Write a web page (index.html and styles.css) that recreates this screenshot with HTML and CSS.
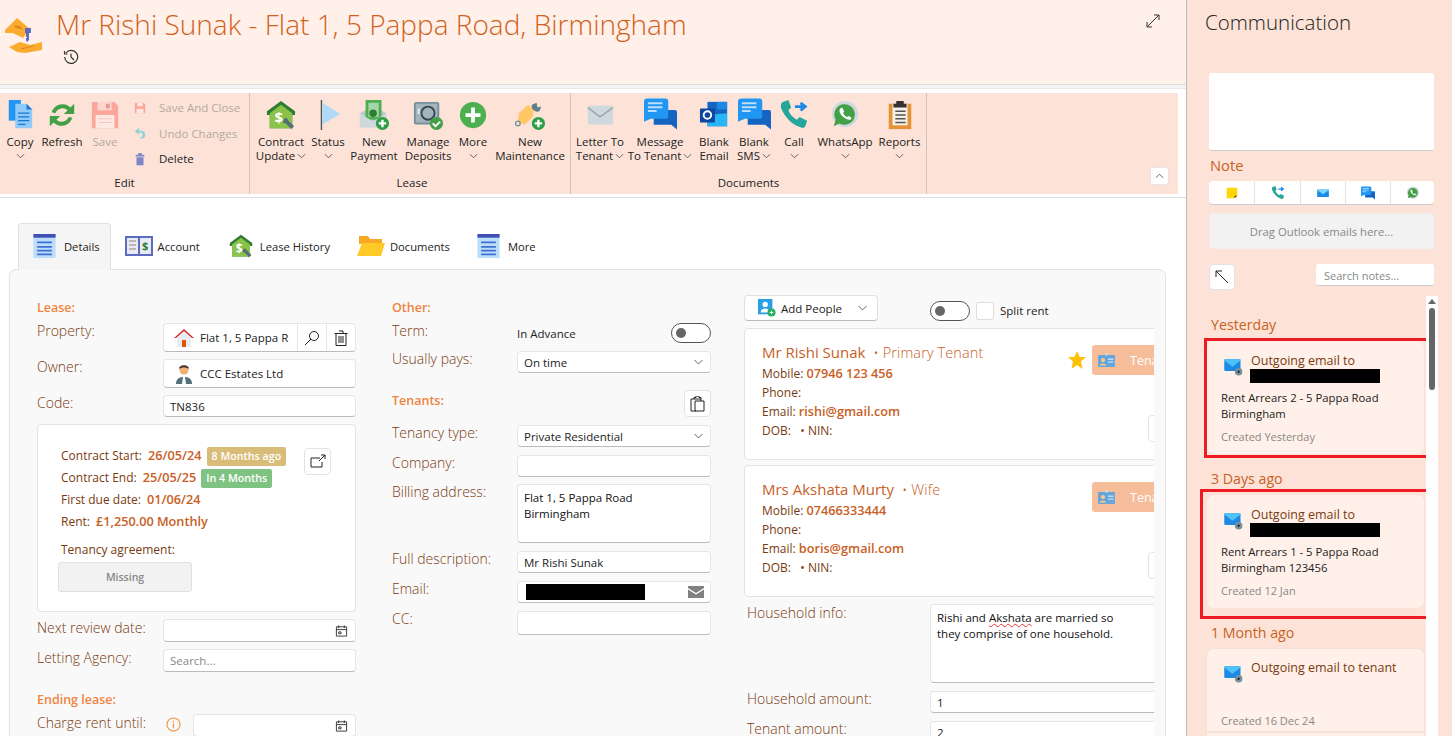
FILE: index.html
```html
<!DOCTYPE html>
<html>
<head>
<meta charset="utf-8">
<title>Lease - Mr Rishi Sunak</title>
<link rel="stylesheet" href="styles.css">
</head>

<body>
<svg class="defs" xmlns="http://www.w3.org/2000/svg">
    <symbol id="i-house-dollar" viewBox="0 0 32 32"><path d="M16 1 1 12v4h3v14h24V16h3v-4z" fill="#2e7d32"/><path d="M4 14 16 5l12 9v16H4z" fill="#8bc34a"/><text x="9" y="25" font-size="16" font-weight="700" fill="#fff" font-family="Open Sans">$</text><path d="M19 20l3-1 2 3 6 6-3 3-6-6-3-1z" fill="#546e7a"/></symbol>
    <symbol id="i-env" viewBox="0 0 32 32"><rect x="3" y="7" width="26" height="18" rx="2" fill="#29b6f6"/><path d="M3 9l13 9 13-9V7H3z" fill="#81d4fa"/><path d="M3 25V11l13 9 13-9v14z" fill="#1e88e5"/></symbol>
    <symbol id="i-env-gear" viewBox="0 0 32 32"><rect x="2" y="5" width="26" height="19" rx="2" fill="#1e88e5"/><path d="M2 7l13 10L28 7V5H2z" fill="#4fc3f7"/><circle cx="25" cy="25" r="6" fill="#78909c"/><circle cx="25" cy="25" r="2" fill="#263238"/></symbol>
    <symbol id="i-chat" viewBox="0 0 34 32"><path d="M10 12h22a2 2 0 0 1 2 2v18l-6-5H10z" fill="#1565c0"/><path d="M3 0h19a3 3 0 0 1 3 3v15a3 3 0 0 1-3 3H7l-7 3V3a3 3 0 0 1 3-3z" fill="#2196f3"/><path d="M4 5h15M4 9h15M4 13h9" stroke="#bbdefb" stroke-width="2"/></symbol>
    <symbol id="i-phone" viewBox="0 0 32 32"><path d="M4 2 10 0l3 8-3 3c2 5 5 8 9 10l3-3 8 4-2 6c-1 2-3 2-5 1C13 26 6 18 2 8 2 5 2 3 4 2z" fill="#26a69a"/><path d="M17 7h9M23 3l5 4-5 4" stroke="#1e88e5" stroke-width="3" fill="none"/></symbol>
    <symbol id="i-wa" viewBox="0 0 32 32"><circle cx="16" cy="15" r="14" fill="#cfd8dc"/><path d="M4 28l2-7a11 11 0 1 1 4 4z" fill="#43a047"/><path d="M11 9l2-1 2 4-1 2c1 2 2 3 4 4l2-1 3 2-1 2c-5 1-12-5-12-10z" fill="#fff"/></symbol>
    <symbol id="i-plus" viewBox="0 0 32 32"><circle cx="16" cy="16" r="14" fill="#4caf50"/><path d="M16 8v16M8 16h16" stroke="#fff" stroke-width="4"/></symbol>
    <symbol id="i-list" viewBox="0 0 24 26"><rect width="24" height="26" fill="#bbdefb"/><rect width="24" height="4" fill="#3f51b5"/><path d="M4 8h16v2H4zM4 13h16v2H4zM4 17h16v2H4zM4 21h16v2H4z" fill="#3f6fd0"/></symbol>
    <symbol id="i-cal" viewBox="0 0 14 14"><path d="M1.500 2.500h11v10h-11zM1.500 5.500h11M4 1v3M10 1v3M4 8h2.500v2H4z" fill="none" stroke="#333"/></symbol>
    <symbol id="i-badge" viewBox="0 0 24 20"><rect x="0" y="3" width="24" height="17" rx="1" fill="#64a6dc"/><circle cx="7" cy="10" r="3" fill="#ffca80"/><path d="M2 18c1-4 8-4 10 0z" fill="#ffca80"/><path d="M14 9h8M14 13h8" stroke="#bbdefb" stroke-width="2"/><circle cx="12" cy="2" r="2" fill="#cfd8dc"/></symbol>
    <symbol id="i-chev" viewBox="0 0 10 6"><path d="M1 1l4 4 4-4" fill="none" stroke="currentColor"/></symbol>
</svg>

<div class="main">
    <div class="head">
        <svg class="head-logo" viewBox="0 0 40 38"><path d="M1 13 13 1l13 11-7 9-10-5H1z" fill="#fbab2e"/><path d="M10 8l6 1 3 4-7-2z" fill="#d98a1c"/><path d="M21 11h6v5h-2v7l-2 2-1-2v-2h1v-1h-1v-4h-1z" fill="#5c6bc0"/><path d="M5 30l11-5 10 3 12-3v8l-17 3-8-1z" fill="#fbab2e"/><path d="M17 32l12-3" stroke="#d98a1c"/></svg>
        <div class="head-text">
            <h1>Mr Rishi Sunak - Flat 1, 5 Pappa Road, Birmingham</h1>
            <svg class="history" viewBox="0 0 16 16"><path d="M3 4a6.500 6.500 0 1 1-1.300 4M1.500 2v3h3M8 4.500V8l3 3" fill="none" stroke="#333" stroke-width="1.200"/></svg>
        </div>
        <svg class="expand" viewBox="0 0 16 16"><path d="M2 14 14 2M9 2h5v5M2 9v5h5" fill="none" stroke="#333"/></svg>
    </div>

    <div class="ribbon">
        <div class="ribbon-in">
            <div class="group group-edit">
                <div class="tools">
                    <div class="tool">
                        <svg class="ico" viewBox="0 0 32 32"><path d="M4 0h13v22H4z" fill="#2196f3"/><path d="M11 4h12l6 6v20H11z" fill="#90caf9"/><path d="M23 4l6 6h-6z" fill="#1976d2"/><path d="M14 14h12M14 18h12M14 22h12M14 26h8" stroke="#1976d2" stroke-width="1.500"/></svg>
                        <span>Copy</span><svg class="chev"><use href="#i-chev"/></svg>
                    </div>
                    <div class="tool">
                        <svg class="ico" viewBox="0 0 32 32"><path d="M5 13A12 12 0 0 1 25 8l4-4v11H18l4-4a8 8 0 0 0-13 3z" fill="#43a047"/><path d="M27 19A12 12 0 0 1 7 24l-4 4V17h11l-4 4a8 8 0 0 0 13-3z" fill="#43a047"/></svg>
                        <span>Refresh</span>
                    </div>
                    <div class="tool off">
                        <svg class="ico" viewBox="0 0 32 32"><path d="M2 2h24l4 4v24H2z" fill="#fba79c"/><path d="M8 2h15v9H8z" fill="#fcd5cd"/><path d="M17 4h4v5h-4z" fill="#e09a90"/><path d="M6 16h20v14H6z" fill="#fde8e2"/><path d="M9 20h14M9 24h14" stroke="#f2c4b8"/></svg>
                        <span>Save</span>
                    </div>
                    <div class="stack">
                        <div class="stack-item off"><svg viewBox="0 0 16 16"><path d="M2 2h10l2 2v10H2z" fill="#fba79c"/><path d="M5 2h6v4H5z" fill="#fde8e2"/><path d="M4 9h8v5H4z" fill="#fde8e2"/></svg>Save And Close</div>
                        <div class="stack-item off"><svg viewBox="0 0 16 16"><path d="M7 2 2 6l5 4V7c3 0 4 1 4 3s-1 3-3 3v1c4 1 6-1 6-4 0-4-3-5-7-5z" fill="#8fcfd6"/></svg>Undo Changes</div>
                        <div class="stack-item"><svg viewBox="0 0 16 16"><path d="M3 3h10v2H3zM6 1h4v2H6zM4 6h8v9H4z" fill="#7e86c9"/></svg>Delete</div>
                    </div>
                </div>
                <div class="group-name">Edit</div>
            </div>
            <div class="group group-lease">
                <div class="tools">
                    <div class="tool"><svg class="ico"><use href="#i-house-dollar"/></svg><span>Contract<br>Update<svg class="chev-in"><use href="#i-chev"/></svg></span></div>
                    <div class="tool">
                        <svg class="ico" viewBox="0 0 32 32"><path d="M9 0v32" stroke="#555" stroke-width="1.500"/><path d="M10 3 29 15 10 26z" fill="#aed9f7"/></svg>
                        <span>Status</span><svg class="chev"><use href="#i-chev"/></svg>
                    </div>
                    <div class="tool">
                        <svg class="ico" viewBox="0 0 32 32"><path d="M1 14 15 6l14 8v15H1z" fill="#b8c7d0"/><rect x="7" y="0" width="17" height="21" fill="#4caf50"/><rect x="10" y="3" width="11" height="15" fill="#a5d6a7"/><circle cx="15" cy="14" r="4" fill="#2e7d32"/><path d="M1 14l14 9 14-9v15H1z" fill="#cfd8dc"/><circle cx="25" cy="25" r="7" fill="#2e9e46"/><path d="M25 21v8M21 25h8" stroke="#fff" stroke-width="2.500"/></svg>
                        <span>New<br>Payment</span>
                    </div>
                    <div class="tool">
                        <svg class="ico" viewBox="0 0 32 32"><rect x="1" y="2" width="27" height="24" rx="2" fill="#78909c"/><rect x="3" y="4" width="23" height="20" fill="#a3b4bd"/><circle cx="16" cy="14" r="7" fill="none" stroke="#37474f" stroke-width="2"/><path d="M6 9v6" stroke="#eceff1" stroke-width="2"/><circle cx="25" cy="25" r="7" fill="#43a047"/><path d="M21 25l3 3 5-5" stroke="#fff" stroke-width="2" fill="none"/></svg>
                        <span>Manage<br>Deposits</span>
                    </div>
                    <div class="tool"><svg class="ico"><use href="#i-plus"/></svg><span>More</span><svg class="chev"><use href="#i-chev"/></svg></div>
                    <div class="tool">
                        <svg class="ico" viewBox="0 0 32 32"><path d="M4 14 14 5l6 5-1 8-9 8-7-3z" fill="#ffc766"/><path d="M18 5a6 6 0 0 0 8 7l2-5-4 1-1-5z" fill="#607d8b"/><circle cx="3" cy="25" r="2.500" fill="none" stroke="#78909c" stroke-width="1.500"/><circle cx="25" cy="25" r="7" fill="#2e9e46"/><path d="M25 21v8M21 25h8" stroke="#fff" stroke-width="2.500"/></svg>
                        <span>New<br>Maintenance</span>
                    </div>
                </div>
                <div class="group-name">Lease</div>
            </div>
            <div class="group group-docs">
                <div class="tools">
                    <div class="tool">
                        <svg class="ico" viewBox="0 0 32 32"><rect x="3" y="6" width="27" height="20" rx="2" fill="#cfd8dc"/><path d="M3 8l13 10L30 8" fill="none" stroke="#90a4ae" stroke-width="1.500"/></svg>
                        <span>Letter To<br>Tenant<svg class="chev-in"><use href="#i-chev"/></svg></span>
                    </div>
                    <div class="tool"><svg class="ico ico-chat"><use href="#i-chat"/></svg><span>Message<br>To Tenant<svg class="chev-in"><use href="#i-chev"/></svg></span></div>
                    <div class="tool">
                        <svg class="ico" viewBox="0 0 32 32"><rect x="9" y="2" width="21" height="26" fill="#1565c0"/><path d="M19 2h11v8H19z" fill="#1e88e5"/><path d="M9 16 30 14v14H9z" fill="#29b6f6"/><rect x="1" y="9" width="16" height="15" rx="1" fill="#0d47a1"/><circle cx="9" cy="16" r="4" fill="none" stroke="#fff" stroke-width="2"/></svg>
                        <span>Blank<br>Email</span>
                    </div>
                    <div class="tool"><svg class="ico ico-chat"><use href="#i-chat"/></svg><span>Blank<br>SMS<svg class="chev-in"><use href="#i-chev"/></svg></span></div>
                    <div class="tool"><svg class="ico"><use href="#i-phone"/></svg><span>Call</span><svg class="chev"><use href="#i-chev"/></svg></div>
                    <div class="tool"><svg class="ico"><use href="#i-wa"/></svg><span>WhatsApp</span><svg class="chev"><use href="#i-chev"/></svg></div>
                    <div class="tool">
                        <svg class="ico" viewBox="0 0 32 32"><rect x="4" y="4" width="24" height="27" fill="#e89237"/><rect x="8" y="4" width="16" height="23" fill="#f5f0e8"/><path d="M12 1h8v3h3v4H9V4h3z" fill="#333"/><path d="M11 12h11M11 16h11M11 20h11M11 24h11" stroke="#555" stroke-width="1.500"/></svg>
                        <span>Reports</span><svg class="chev"><use href="#i-chev"/></svg>
                    </div>
                </div>
                <div class="group-name">Documents</div>
            </div>
            <div class="ribbon-end"><button class="collapse"><svg viewBox="0 0 10 6"><path d="M1 5l4-4 4 4" fill="none" stroke="#555"/></svg></button></div>
        </div>
    </div>

    <div class="tabs">
        <div class="tab active"><svg class="tab-ico"><use href="#i-list"/></svg>Details</div>
        <div class="tab">
            <svg class="tab-ico wide" viewBox="0 0 28 24"><path d="M1 3h13v18H1zM14 3h13v18H14z" fill="#e8eaf6" stroke="#5c6bc0" stroke-width="2"/><path d="M4 7h7M4 11h7M4 15h7" stroke="#b0a8a0" stroke-width="1.500"/><text x="17" y="16" font-size="11" font-weight="700" fill="#2e7d32" font-family="Open Sans">$</text></svg>
            Account
        </div>
        <div class="tab"><svg class="tab-ico wide"><use href="#i-house-dollar"/></svg>Lease History</div>
        <div class="tab">
            <svg class="tab-ico wide" viewBox="0 0 28 24"><path d="M2 2h9l2 3h12v5H2z" fill="#f9a825"/><path d="M0 22 5 9h23l-4 13z" fill="#ffca28"/></svg>
            Documents
        </div>
        <div class="tab"><svg class="tab-ico"><use href="#i-list"/></svg>More</div>
    </div>

    <div class="panel">
        <!-- lease column -->
        <div class="col col-lease">
            <div class="sec">Lease:</div>
            <div class="row">
                <label>Property:</label>
                <div class="field h29 joined">
                    <svg class="f-ico" viewBox="0 0 20 20"><path d="M10 1 0 10h3v9h14v-9h3z" fill="#e8edf2"/><path d="M10 1 0 10h2l8-7 8 7h2z" fill="#d32f2f"/><rect x="8" y="12" width="4" height="7" fill="#e65100"/></svg>
                    <span class="f-text">Flat 1, 5 Pappa R</span>
                    <span class="f-btn"><svg viewBox="0 0 16 16"><circle cx="10" cy="6" r="4.500" fill="none" stroke="#222"/><path d="M7 9l-6 6" stroke="#222"/></svg></span>
                    <span class="f-btn"><svg viewBox="0 0 16 16"><path d="M3 3.500h10v12H3zM1.500 3.500h13M6 1h4v2.500M6 6v7M8 6v7M10 6v7" fill="none" stroke="#222"/></svg></span>
                </div>
            </div>
            <div class="row">
                <label>Owner:</label>
                <div class="field h29">
                    <svg class="f-ico" viewBox="0 0 20 20"><circle cx="10" cy="6" r="4.500" fill="#f0b070"/><path d="M5 5c0-5 10-5 10 0-3-2-7-2-10 0z" fill="#4e342e"/><path d="M2 20c0-6 4-7 8-7s8 1 8 7z" fill="#546e7a"/><path d="M9 13h2l1 7H8z" fill="#fff"/></svg>
                    <span class="f-text">CCC Estates Ltd</span>
                </div>
            </div>
            <div class="row">
                <label>Code:</label>
                <div class="field h22 pad"><span class="f-text">TN836</span></div>
            </div>
            <div class="contract">
                <div class="contract-top">
                    <div class="facts">
                        <div class="fact">Contract Start: <b>26/05/24</b><em class="tag tag-past">8 Months ago</em></div>
                        <div class="fact">Contract End: <b>25/05/25</b><em class="tag tag-next">In 4 Months</em></div>
                        <div class="fact">First due date: <b>01/06/24</b></div>
                        <div class="fact">Rent: <b>£1,250.00</b> <b>Monthly</b></div>
                    </div>
                    <button class="sq-btn"><svg viewBox="0 0 16 16"><path d="M10 4H1v9h11V8M9 7l6-6M11 1h4v4" fill="none" stroke="#222"/></svg></button>
                </div>
                <div class="agree">Tenancy agreement:</div>
                <div class="missing">Missing</div>
            </div>
            <div class="row row-low">
                <label>Next review date:</label>
                <div class="field h23 pad end"><svg class="cal"><use href="#i-cal"/></svg></div>
            </div>
            <div class="row row-low">
                <label>Letting Agency:</label>
                <div class="field h23 pad"><span class="f-hint">Search...</span></div>
            </div>
            <div class="sec sec-end">Ending lease:</div>
            <div class="row row-charge row-low">
                <label>Charge rent until:</label>
                <svg class="info" viewBox="0 0 16 16"><circle cx="8" cy="8" r="7" fill="none" stroke="#f0943f" stroke-width="1.200"/><path d="M8 7v5M8 4v1.500" stroke="#f0943f" stroke-width="1.200"/></svg>
                <div class="field h23 pad end"><svg class="cal"><use href="#i-cal"/></svg></div>
            </div>
        </div>

        <!-- other column -->
        <div class="col col-other">
            <div class="sec">Other:</div>
            <div class="row r7">
                <label>Term:</label>
                <div class="term"><span>In Advance</span><i class="toggle"></i></div>
            </div>
            <div class="row">
                <label>Usually pays:</label>
                <div class="field h22 pad between"><span class="f-text">On time</span><svg class="sel"><use href="#i-chev"/></svg></div>
            </div>
            <div class="sec-row">
                <div class="sec">Tenants:</div>
                <button class="sq-btn"><svg viewBox="0 0 16 16"><path d="M5 3H1v12h5M5 5h9v10H5zM4 3V1.500h2V0h3v1.500h2V5M5 3h6" fill="none" stroke="#222"/></svg></button>
            </div>
            <div class="row">
                <label>Tenancy type:</label>
                <div class="field h22 pad between"><span class="f-text">Private Residential</span><svg class="sel"><use href="#i-chev"/></svg></div>
            </div>
            <div class="row">
                <label>Company:</label>
                <div class="field h22"></div>
            </div>
            <div class="row r7">
                <label>Billing address:</label>
                <div class="field h59 area">Flat 1, 5 Pappa Road<br>Birmingham</div>
            </div>
            <div class="row">
                <label>Full description:</label>
                <div class="field h22 pad"><span class="f-text">Mr Rishi Sunak</span></div>
            </div>
            <div class="row">
                <label>Email:</label>
                <div class="field h22 pad between">
                    <span class="redact redact-mail"></span>
                    <svg class="mail" viewBox="0 0 16 12"><path d="M0 0h16v2L8 7 0 2z" fill="#808080"/><path d="M0 3.500 8 8.500l8-5V12H0z" fill="#808080"/></svg>
                </div>
            </div>
            <div class="row">
                <label>CC:</label>
                <div class="field h24"></div>
            </div>
        </div>

        <!-- people column -->
        <div class="col col-people">
            <div class="people-bar">
                <button class="add-people">
                    <svg class="add-ico" viewBox="0 0 20 20"><rect x="0" y="0" width="16" height="17" fill="#2b9fe6"/><circle cx="8" cy="6" r="3" fill="#fff"/><path d="M3 15c0-6 10-6 10 0z" fill="#fff"/><circle cx="15" cy="15" r="4.500" fill="#27ae60"/><path d="M15 13v4M13 15h4" stroke="#fff"/></svg>
                    Add People
                    <svg class="sel"><use href="#i-chev"/></svg>
                </button>
                <i class="toggle"></i>
                <i class="check"></i>
                <span class="split">Split rent</span>
            </div>
            <div class="card">
                <div class="card-main">
                    <div class="who">Mr Rishi Sunak <small>• Primary Tenant</small></div>
                    <div class="line">Mobile: <b>07946 123 456</b></div>
                    <div class="line">Phone:</div>
                    <div class="line">Email: <b>rishi@gmail.com</b></div>
                    <div class="line">DOB: &nbsp; • NIN:</div>
                </div>
                <div class="card-side">
                    <div class="card-acts">
                        <svg class="star" viewBox="0 0 18 18"><path d="M9 0l2.700 6H18l-5 4.500L14.500 18 9 14l-5.500 4L5 10.500 0 6h6.300z" fill="#ffc107"/></svg>
                        <div class="tenant-btn"><svg class="badge"><use href="#i-badge"/></svg>Tenant</div>
                    </div>
                    <button class="sq-btn sq-side"></button>
                </div>
            </div>
            <div class="card">
                <div class="card-main">
                    <div class="who">Mrs Akshata Murty <small>• Wife</small></div>
                    <div class="line">Mobile: <b>07466333444</b></div>
                    <div class="line">Phone:</div>
                    <div class="line">Email: <b>boris@gmail.com</b></div>
                    <div class="line">DOB: &nbsp; • NIN:</div>
                </div>
                <div class="card-side">
                    <div class="card-acts">
                        <span class="star"></span>
                        <div class="tenant-btn"><svg class="badge"><use href="#i-badge"/></svg>Tenant</div>
                    </div>
                    <button class="sq-btn sq-side"></button>
                </div>
            </div>
            <div class="house">
                <label>Household info:</label>
                <div class="field h79 area">Rishi and <u>Akshata</u> are married so<br>they comprise of one household.</div>
            </div>
            <div class="house">
                <label>Household amount:</label>
                <div class="field h22 pad"><span class="f-text">1</span></div>
            </div>
            <div class="house">
                <label>Tenant amount:</label>
                <div class="field h22 pad"><span class="f-text">2</span></div>
            </div>
        </div>
    </div>
</div>

<div class="side">
    <div class="side-title">Communication</div>
    <div class="note-box"></div>
    <div class="note-label">Note</div>
    <div class="note-bar">
        <span><svg viewBox="0 0 16 16"><path d="M2 2h12v9l-3 3H2z" fill="#ffd600"/><path d="M14 11h-3v3z" fill="#424242"/></svg></span>
        <span><svg><use href="#i-phone"/></svg></span>
        <span><svg><use href="#i-env"/></svg></span>
        <span><svg><use href="#i-chat"/></svg></span>
        <span><svg><use href="#i-wa"/></svg></span>
    </div>
    <div class="drag">Drag Outlook emails here...</div>
    <div class="note-tools">
        <button class="sq-btn"><svg viewBox="0 0 16 16"><path d="M14 14 2 2M2 8V2h6" fill="none" stroke="#222"/></svg></button>
        <div class="search">Search notes...</div>
    </div>
    <div class="feed">
        <div class="feed-list">
            <div class="when">Yesterday</div>
            <div class="note mark-a">
                <div class="note-head">
                    <svg class="note-ico"><use href="#i-env-gear"/></svg>
                    <div><div class="note-title">Outgoing email to</div><span class="redact redact-to"></span></div>
                </div>
                <div class="note-body">Rent Arrears 2 - 5 Pappa Road<br>Birmingham</div>
                <div class="note-date">Created Yesterday</div>
            </div>
            <div class="when">3 Days ago</div>
            <div class="note mark-b">
                <div class="note-head">
                    <svg class="note-ico"><use href="#i-env-gear"/></svg>
                    <div><div class="note-title">Outgoing email to</div><span class="redact redact-to"></span></div>
                </div>
                <div class="note-body">Rent Arrears 1 - 5 Pappa Road<br>Birmingham 123456</div>
                <div class="note-date">Created 12 Jan</div>
            </div>
            <div class="when">1 Month ago</div>
            <div class="note note-short">
                <div class="note-head">
                    <svg class="note-ico"><use href="#i-env-gear"/></svg>
                    <div class="note-title">Outgoing email to tenant</div>
                </div>
                <div class="note-date">Created 16 Dec 24</div>
            </div>
            <div class="note"></div>
        </div>
        <div class="scroll"><i class="scroll-up"></i><i class="scroll-thumb"></i></div>
    </div>
</div>
</body>

</html>
```

FILE: styles.css
```css
* { margin: 0; padding: 0; box-sizing: border-box; }
html, body { width: 1452px; height: 736px; overflow: hidden; }
body { display: flex; background: #fff; font-family: "Open Sans", "Noto Sans", sans-serif; font-size: 12px; color: #222; }
svg { display: block; }
button { background: #fff; font-family: inherit; }
.defs { display: none; }

.main { width: 1186px; height: 736px; overflow: hidden; flex: none; }

/*header*/
.head { height: 85px; background: #fff0e9; border-bottom: 1px solid #ddd; display: flex; padding: 11px 25px 0 4px; }
.head-logo { width: 40px; height: 38px; margin-top: 6px; }
.head-text { margin-left: 12px; flex: 1; }
h1 { font-size: 28px; font-weight: 300; line-height: 26px; color: #d2611c; white-space: nowrap; }
.history { width: 16px; height: 16px; margin: 12px 0 0 7px; }
.expand { width: 16px; height: 16px; margin-top: 2px; }

/*ribbon*/
.ribbon { height: 110px; margin: 3px 0 25px; background: #fff; padding: 4px 8px 3px 0; border-top: 1px solid #e8e8e8; border-bottom: 1px solid #ddd; box-shadow: 0 -3px 0 #f4f4f4; }
.ribbon-in { height: 100%; display: flex; background: #fde3d7; }
.group { border-right: 1px solid #cfc5bd; display: flex; flex-direction: column; position: relative; }
.group-edit { width: 250px; }
.group-lease { width: 321px; padding-left: 4px; }
.group-docs { width: 356px; }
.ribbon-end { flex: 1; display: flex; align-items: flex-end; justify-content: flex-end; padding: 0 9px 9px 0; }
.collapse { width: 19px; height: 18px; border: 1px solid #e5e5e5; border-radius: 3px; display: flex; align-items: center; justify-content: center; }
.collapse svg { width: 9px; height: 6px; }
.tools { flex: 1; display: grid; }
.group-edit .tools { grid-template-columns: 40px 44px 42px 1fr; }
.group-lease .tools { grid-template-columns: 54px 40px 52px 56px 34px 80px; }
.group-docs .tools { grid-template-columns: 58px 62px 46px 34px 46px 56px 53px; }
.tool { display: flex; flex-direction: column; align-items: center; padding-top: 7px; text-align: center; font-size: 11.500px; line-height: 14px; white-space: nowrap; color: #222; }
.tool span { margin-top: 5px; }
.ico { width: 30px; height: 30px; flex: none; }
.ico-chat { width: 33px; height: 32px; margin: -2px 0 0; }
.chev { width: 9px; height: 6px; margin-top: 4px; color: #555; }
.chev-in { display: inline-block; width: 9px; height: 6px; margin-left: 2px; vertical-align: 1px; color: #555; }
.off { color: #b4a8a2; }
.stack { padding: 2px 0 0 7px; }
.stack-item { display: flex; align-items: center; height: 25.500px; white-space: nowrap; font-size: 11.500px; }
.stack-item svg { width: 14px; height: 14px; margin-right: 12px; }
.group-name { height: 18px; text-align: center; font-size: 11.500px; line-height: 14px; flex: none; }

/*tabs*/
.tabs { display: flex; height: 47px; padding-left: 18px; position: relative; z-index: 1; margin-bottom: -1px; }
.tab { display: flex; align-items: center; padding: 0 12px 2px 13px; font-size: 11.200px; border: 1px solid transparent; border-bottom: 0; white-space: nowrap; }
.tab.active { background: #f5f5f5; border-color: #e0e0e0; border-radius: 4px 4px 0 0; padding: 0 10px 2px 14px; }
.tab-ico { width: 23px; height: 24px; margin-right: 8px; }
.tab-ico.wide { width: 28px; margin-right: 5px; }

/*form panel*/
.panel { margin-left: 9px; width: 1157px; height: 500px; background: #f9f9f9; border: 1px solid #e3e3e3; border-radius: 7px; padding: 25px 0 0 27px; display: flex; overflow: hidden; }
.col-lease, .col-other { width: 319px; padding-top: 3px; flex: none; }
.col-other { margin-left: 36px; }
.col-people { width: 410px; margin-left: 33px; flex: none; overflow: hidden; }
.sec { height: 18px; line-height: 20px; font-size: 12.500px; font-weight: 600; color: #f0843f; }
.sec-end { margin-top: 18px; }
.sec-row { display: flex; justify-content: space-between; margin-top: 17px; height: 27px; align-items: flex-start; }
.sec-row .sec { margin-top: 1px; }
.row { display: grid; grid-template-columns: 126px 1fr; margin-top: 7px; }
.col-other .row { grid-template-columns: 125px 1fr; margin-top: 8px; }
.col-other .row.r7 { margin-top: 7px; }
.row-low label { padding-top: 1px; }
.row-charge { grid-template-columns: 126px 30px 1fr; margin-top: 6px; }
label { font-size: 14px; font-weight: 300; color: #7a3a10; line-height: 16px; white-space: nowrap; }
.field { display: flex; align-items: center; background: #fff; border: 1px solid #e5e5e5; border-bottom-color: #bbb; border-radius: 4px; font-size: 11.500px; overflow: hidden; }
.h22 { height: 22px; }
.h23 { height: 23px; }
.h24 { height: 24px; }
.h29 { height: 29px; }
.h59 { height: 59px; }
.h79 { height: 79px; }
.pad { padding: 0 6px; }
.end { justify-content: flex-end; padding-right: 7px; }
.between { justify-content: space-between; }
.area { display: block; padding: 5px 6px; line-height: 16px; color: #111; font-size: 11.500px; white-space: nowrap; }
.f-ico { width: 20px; height: 20px; margin: 0 6px 0 10px; flex: none; }
.f-text { white-space: nowrap; flex: 1; }
.f-hint { color: #888; }
.f-btn { width: 29px; height: 100%; border-left: 1px solid #e5e5e5; display: flex; align-items: center; justify-content: center; flex: none; }
.f-btn svg { width: 16px; height: 16px; }
.cal { width: 13px; height: 14px; }
.sel { width: 11px; height: 6px; color: #666; flex: none; }
.mail { width: 16px; height: 12px; }
.info { width: 15px; height: 15px; margin: 3px 0 0 3px; }
.redact { display: block; background: #000; }
.redact-mail { width: 119px; height: 16px; margin-left: 2px; }

/*contract box*/
.contract { margin-top: 7px; height: 188px; background: #fff; border: 1px solid #e3e3e3; border-radius: 4px; padding: 19px 24px 0 20px; }
.contract-top { display: flex; justify-content: space-between; padding-left: 3px; height: 88px; }
.fact { height: 22px; line-height: 22px; color: #7a3a10; white-space: nowrap; font-size: 12px; }
.fact b { color: #c8601f; font-weight: 600; font-size: 12.700px; margin-left: 3px; }
.fact b + b { margin-left: 0; }
.tag { display: inline-block; height: 19px; line-height: 19px; padding: 0 5px; margin-left: 5px; border-radius: 2px; color: #fff; font-style: normal; font-weight: 600; font-size: 10.700px; }
.tag-past { background: #d9bc78; }
.tag-next { background: #7fc382; }
.sq-btn { width: 27px; height: 27px; border: 1px solid #e3e3e3; border-radius: 4px; display: flex; align-items: center; justify-content: center; background: #fff; flex: none; }
.sq-btn svg { width: 16px; height: 16px; }
.contract .sq-btn { margin-top: 4px; }
.agree { margin: 10px 0 0 3px; height: 16px; line-height: 16px; color: #7a3a10; font-size: 12px; }
.missing { width: 134px; height: 30px; margin-top: 4px; background: #f2f2f2; border: 1px solid #e0e0e0; border-radius: 3px; line-height: 28px; text-align: center; font-size: 10.500px; font-weight: 600; color: #888; }

.term { display: flex; justify-content: space-between; align-items: center; height: 20px; }
.term span { font-size: 11.500px; }
.toggle { display: block; width: 40px; height: 20px; border: 1px solid #555; border-radius: 10px; background: #fff; position: relative; flex: none; }
.toggle::after { content: ""; position: absolute; left: 4px; top: 4px; width: 10px; height: 10px; border-radius: 50%; background: #666; }

/*people*/
.people-bar { display: flex; align-items: center; height: 26px; }
.add-people { width: 134px; height: 26px; border: 1px solid #e0e0e0; border-bottom-color: #bbb; border-radius: 4px; display: flex; align-items: center; padding: 0 9px 0 13px; font-size: 11.500px; color: #222; }
.add-ico { width: 18px; height: 18px; margin-right: 5px; }
.add-people .sel { margin-left: auto; }
.people-bar .toggle { margin: 6px 0 0 52px; }
.check { display: block; width: 18px; height: 18px; margin: 6px 0 0 6px; background: #fff; border: 1px solid #ddd; border-radius: 2px; }
.split { margin: 5px 0 0 6px; font-size: 11.500px; }
.card { width: 500px; height: 132px; margin-top: 7px; background: #fff; border: 1px solid #e3e3e3; border-radius: 4px; display: flex; }
.card + .card { margin-top: 5px; }
.card-main { width: 323px; padding: 13px 0 0 17px; }
.who { font-size: 15px; font-weight: 400; line-height: 21px; color: #c8601f; white-space: nowrap; margin-bottom: 1px; }
.who small { font-size: 14.500px; font-weight: 300; margin-left: 4px; letter-spacing: 0.100px; }
.line { height: 19px; line-height: 19px; color: #7a3a10; white-space: nowrap; font-size: 12px; }
.line b { color: #c8601f; font-weight: 600; font-size: 12.700px; }
.card-side { padding-top: 16px; }
.card-acts { display: flex; align-items: center; height: 30px; }
.star { display: block; width: 18px; height: 18px; margin-right: 6px; flex: none; }
.tenant-btn { width: 100px; height: 30px; background: #f5bd9a; border-radius: 3px; color: #fff; display: flex; align-items: center; padding-left: 6px; font-size: 12.500px; }
.badge { width: 17px; height: 14px; margin-right: 15px; }
.sq-side { margin: 40px 0 0 80px; }
.house { display: grid; grid-template-columns: 186px 240px; margin-top: 8px; padding-left: 3px; }
.card + .house { margin-top: 7px; }
.card + .house label { padding-top: 1px; }
.house .field { margin-left: -3px; }
u { text-decoration: underline wavy #e33 1px; text-underline-offset: 1px; }

/*communication panel*/
.side { width: 266px; height: 736px; background: #fde3d7; border-left: 1px solid #bbb; padding: 0 18px 0 22px; overflow: hidden; flex: none; }
.side-title { height: 73px; padding-top: 8px; margin-left: -4px; font-size: 20.500px; font-weight: 300; line-height: 28px; color: #222; }
.note-box { height: 78px; background: #fff; border-radius: 3px; border-bottom: 1px solid #ccc; }
.note-label { height: 30px; padding: 0 0 2px 1px; font-size: 14.700px; font-weight: 400; line-height: 28px; color: #c8601f; }
.note-bar { height: 24px; display: grid; grid-template-columns: 45px 46px 45px 45px 1fr; background: #fff; border-radius: 4px; border-bottom: 1px solid #ccc; }
.note-bar span { display: flex; align-items: center; justify-content: center; border-left: 1px solid #e3e3e3; }
.note-bar span:first-child { border-left: 0; }
.note-bar svg { width: 14px; height: 14px; }
.drag { height: 36px; margin-top: 8px; background: #f2f2f2; border-radius: 3px; border: 1px solid #eee; text-align: center; line-height: 35px; font-size: 11.300px; color: #888; }
.note-tools { display: flex; justify-content: space-between; height: 32px; margin-top: 15px; }
.note-tools .sq-btn { width: 26px; height: 26px; }
.search { width: 118px; height: 22px; background: #fff; border-radius: 3px; border-bottom: 1px solid #ccc; padding-left: 8px; line-height: 23px; font-size: 11px; color: #888; }
.feed { display: flex; margin: 0 -4px 0 -22px; }
.feed-list { width: 239px; padding: 18px 1px 0 19px; flex: none; }
.when { height: 22px; margin: 13px 0 4px 5px; font-size: 14.200px; font-weight: 400; line-height: 22px; color: #c8601f; }
.when:first-child { margin-top: 0; }
.note { height: 115px; background: #fff0e9; border: 1px solid #f5e3da; border-radius: 8px; padding: 12px 14px 0; position: relative; }
.note-short { height: 84px; border-bottom-left-radius: 0; border-bottom-right-radius: 0; padding-top: 11px; }
.note-short + .note { border-radius: 0; margin-top: 0; }
.note-head { display: flex; height: 31px; }
.note-ico { width: 20px; height: 20px; margin: 3px 8px 0 2px; flex: none; }
.note-title { font-size: 12.500px; line-height: 16px; color: #7a3a10; white-space: nowrap; }
.redact-to { width: 130px; height: 14px; margin-left: -1px; }
.note-body { margin-top: 6px; font-size: 11.300px; line-height: 16px; color: #222; white-space: nowrap; }
.note-date { margin-top: 7px; font-size: 11px; line-height: 16px; color: #888; white-space: nowrap; }
.note-short .note-date { margin-top: 22px; }
.mark-a::after, .mark-b::after { content: ""; position: absolute; border: 3px solid #ed1c24; }
.mark-a::after { left: -3px; top: -3px; right: -6px; bottom: -4px; }
.mark-b::after { left: -7px; top: -6px; right: -10px; bottom: -11px; }
.scroll { width: 12px; height: 440px; background: #fff; flex: none; position: relative; }
.scroll-up { display: block; width: 0; height: 0; margin: 3px 0 0 2px; border: 4px solid transparent; border-top: 0; border-bottom: 5px solid #666; }
.scroll-thumb { display: block; width: 6px; height: 82px; margin: 4px 0 0 3px; background: #666; border-radius: 3px; }
```
